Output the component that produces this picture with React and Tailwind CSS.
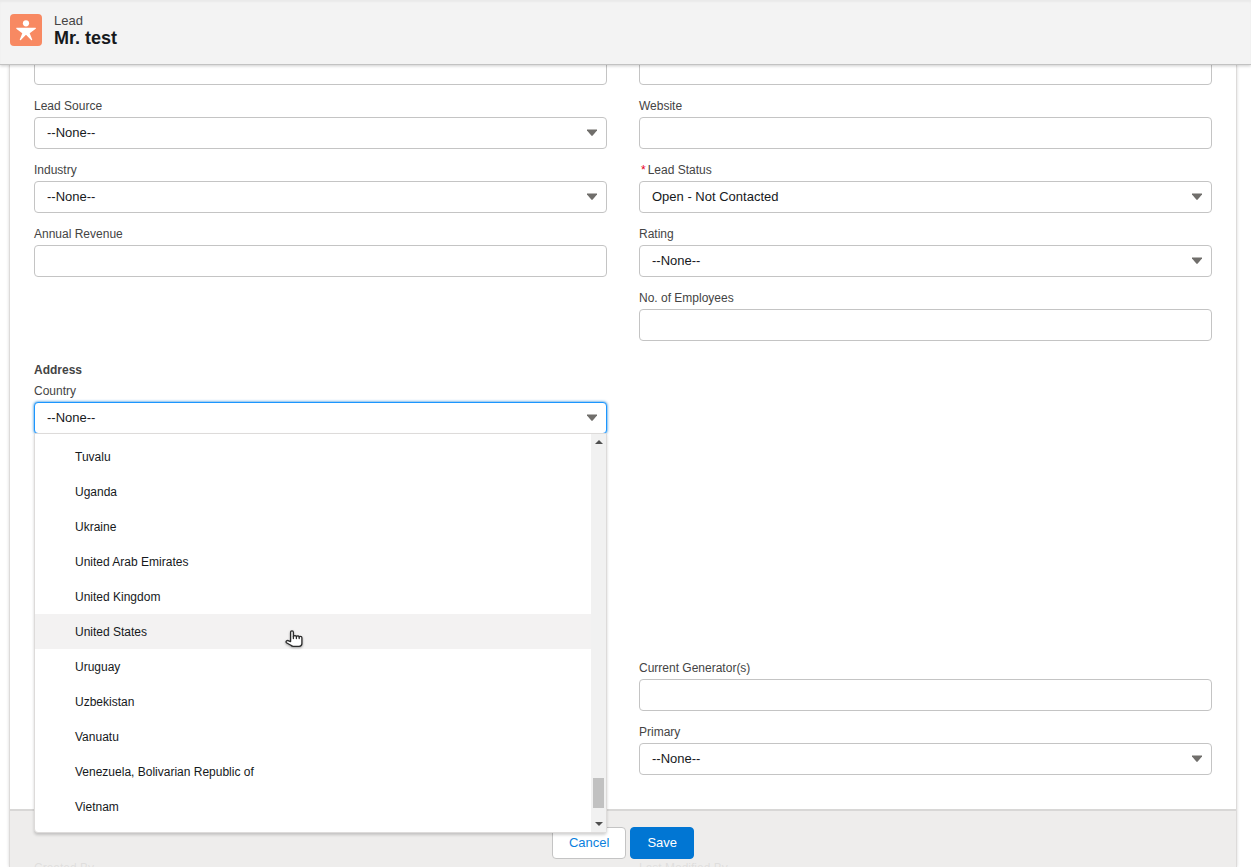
import { useState } from 'react'

const COUNTRIES = [
  'Tuvalu',
  'Uganda',
  'Ukraine',
  'United Arab Emirates',
  'United Kingdom',
  'United States',
  'Uruguay',
  'Uzbekistan',
  'Vanuatu',
  'Venezuela, Bolivarian Republic of',
  'Vietnam'
]

const controlClass =
  'block w-full h-8 rounded border bg-white px-3 text-[13px] leading-[18px] text-[#16191c] outline-none'

function Label({ id, required, children }) {
  return (
    <label htmlFor={id} className="block mb-0.5 text-xs leading-[18px] text-[#444444]">
      {required && <span className="mx-0.5 text-[#e8001c]">*</span>}
      {children}
    </label>
  )
}

function TextField({ id, label }) {
  return (
    <div>
      <Label id={id}>{label}</Label>
      <input id={id} type="text" className={`${controlClass} border-[#c4c4c4]`} />
    </div>
  )
}

function SelectField({ id, label, required, value = '--None--', open }) {
  return (
    <div>
      <Label id={id} required={required}>{label}</Label>
      <div className="relative">
        <select
          id={id}
          required={required}
          className={`${controlClass} appearance-none ${open ? 'border-[#1b96ff] shadow-[0_0_3px_#0176d3]' : 'border-[#c4c4c4]'}`}
        >
          <option>{value}</option>
        </select>
        <svg
          className="absolute right-2.5 top-3 w-2.5 h-2 pointer-events-none"
          viewBox="0 0 10 8"
          fill="#706e6b"
        >
          <path d="M0 .4h10v1L5.700 6.600q-.7.800-1.400 0L0 1.400z" />
        </svg>
      </div>
    </div>
  )
}

// Pointing hand shown over the hovered option
function HandPointer() {
  return (
    <svg
      className="absolute left-[250px] top-4 w-[19px] h-5 pointer-events-none drop-shadow-[0_1px_1px_rgba(0,0,0,0.35)]"
      viewBox="0 0 19 20"
      fill="#fff"
      stroke="#2b2b2b"
      strokeWidth="1.3"
      strokeLinejoin="round"
      strokeLinecap="round"
    >
      <path d="M5.6 11.6V2.4q0-1.5 1.4-1.5t1.4 1.5v4q.4-.8 1.5-.8t1.5 1q.4-.7 1.4-.7t1.4 1q.4-.6 1.3-.6 1.4 0 1.400 1.500v5.700q0 2.800-2.800 2.800H8.200q-1.400 0-2.300-1L1.400 12.700q-.8-1.100.3-1.900 1-.7 2 .1z" />
      <path d="M8.400 6.400v2.200M11.400 6.600v2M14.200 6.900v1.700" fill="none" />
    </svg>
  )
}

function CountryMenu() {
  const [active, setActive] = useState('United States')

  return (
    <div className="absolute inset-x-0 top-full -mt-px flex rounded-b border border-[#dddbda] bg-white shadow-[0_2px_3px_rgba(0,0,0,0.18)]">
      <ul role="listbox" aria-label="Country" className="flex-1 pt-[5px] pb-2">
        {COUNTRIES.map(name => (
          <li
            key={name}
            role="option"
            aria-selected={name === active}
            onMouseEnter={() => setActive(name)}
            className={`relative flex items-center h-[35px] pl-10 text-xs text-[#16191c] ${name === active ? 'bg-[#f3f2f2]' : ''}`}
          >
            {name}
            {name === active && <HandPointer />}
          </li>
        ))}
      </ul>

      {/* Scrollbar */}
      <div className="w-[15px] flex flex-col items-center justify-between bg-[#f1f1f1] py-1.5">
        <svg className="w-2 h-1" viewBox="0 0 8 4" fill="#505050">
          <path d="M0 4L4 0l4 4z" />
        </svg>
        <div className="flex flex-col items-center gap-3.5">
          <div className="w-[11px] h-[30px] bg-[#c1c1c1]" />
          <svg className="w-2 h-1" viewBox="0 0 8 4" fill="#505050">
            <path d="M0 0l4 4 4-4z" />
          </svg>
        </div>
      </div>
    </div>
  )
}

export default function LeadEdit() {
  return (
    <div className="h-screen flex flex-col overflow-hidden bg-white font-['Liberation_Sans',Arial,sans-serif]">

      {/* Header */}
      <header className="relative z-30 flex items-start gap-3 h-[65px] shrink-0 border-b border-[#c2c2c2] bg-[#f3f3f3] px-2.5 pt-3.5 shadow-[0_1px_3px_rgba(0,0,0,0.2),inset_0_2px_2px_rgba(0,0,0,0.04)]">
        <svg className="w-8 h-8 rounded" viewBox="0 0 32 32">
          <rect width="32" height="32" fill="#f88962" />
          <circle cx="16" cy="9.300" r="3.100" fill="#fff" />
          <path
            fill="#fff"
            d="M6.600 13.700h18.800q.8 0 .5.700-.1.300-.5.500l-5.700 4.300 2.500 6.300q.2.600-.4.700-.4.100-.7-.300L16 20.700l-5.100 5.200q-.4.400-.8.200-.5-.2-.3-.7l2.500-6.200-5.700-4.300q-.5-.3-.4-.8.100-.4.400-.4z"
          />
        </svg>
        <div>
          <p className="text-[13px] leading-[14px] text-[#444444]">Lead</p>
          <h1 className="text-lg leading-5 font-bold text-[#16191c]">Mr. test</h1>
        </div>
      </header>

      {/* Record form */}
      <form
        onSubmit={e => e.preventDefault()}
        className="relative flex-1 min-h-0 ml-[9px] mr-3.5 border-x border-[#dddbda] shadow-[0_0_3px_rgba(0,0,0,0.16)]"
      >
        <div className="h-full overflow-hidden px-6">
          <div className="-mt-3 grid grid-cols-2 gap-x-8 items-start">
            <div className="flex flex-col gap-3">
              <input aria-label="Company" type="text" className={`${controlClass} border-[#c4c4c4]`} />
              <SelectField id="source" label="Lead Source" />
              <SelectField id="industry" label="Industry" />
              <TextField id="revenue" label="Annual Revenue" />
            </div>
            <div className="flex flex-col gap-3">
              <input aria-label="Fax" type="text" className={`${controlClass} border-[#c4c4c4]`} />
              <TextField id="website" label="Website" />
              <SelectField id="status" label="Lead Status" required value="Open - Not Contacted" />
              <SelectField id="rating" label="Rating" />
              <TextField id="employees" label="No. of Employees" />
            </div>
          </div>

          {/* Address */}
          <div className="mt-5 grid grid-cols-2 gap-x-8 min-h-[298px]">
            <fieldset className="min-w-0">
              <legend className="mb-[3px] text-xs leading-[18px] font-bold text-[#444444]">Address</legend>
              <div className="relative z-20">
                <SelectField id="country" label="Country" open />
                <CountryMenu />
              </div>
            </fieldset>
          </div>

          <div className="grid grid-cols-2 gap-x-8">
            <div className="col-start-2 flex flex-col gap-3">
              <TextField id="generators" label="Current Generator(s)" />
              <SelectField id="primary" label="Primary" />
            </div>
          </div>

          <div className="mt-[84px] grid grid-cols-2 gap-x-8 text-xs leading-[18px] text-[#444444]">
            <p>Created By</p>
            <p>Last Modified By</p>
          </div>
        </div>

        {/* Footer actions */}
        <div className="absolute inset-x-0 bottom-0 z-10 flex justify-center gap-1 border-t-2 border-[#d8d7d6] bg-[#edecea]/92 pt-4 pb-2">
          <button type="button" className="h-8 rounded border border-[#c4c4c4] bg-white px-4 text-[13px] text-[#0b7fdd]">
            Cancel
          </button>
          <button type="submit" className="h-8 rounded border border-[#0176d3] bg-[#0176d3] px-4 text-[13px] text-white">
            Save
          </button>
        </div>
      </form>

    </div>
  )
}
